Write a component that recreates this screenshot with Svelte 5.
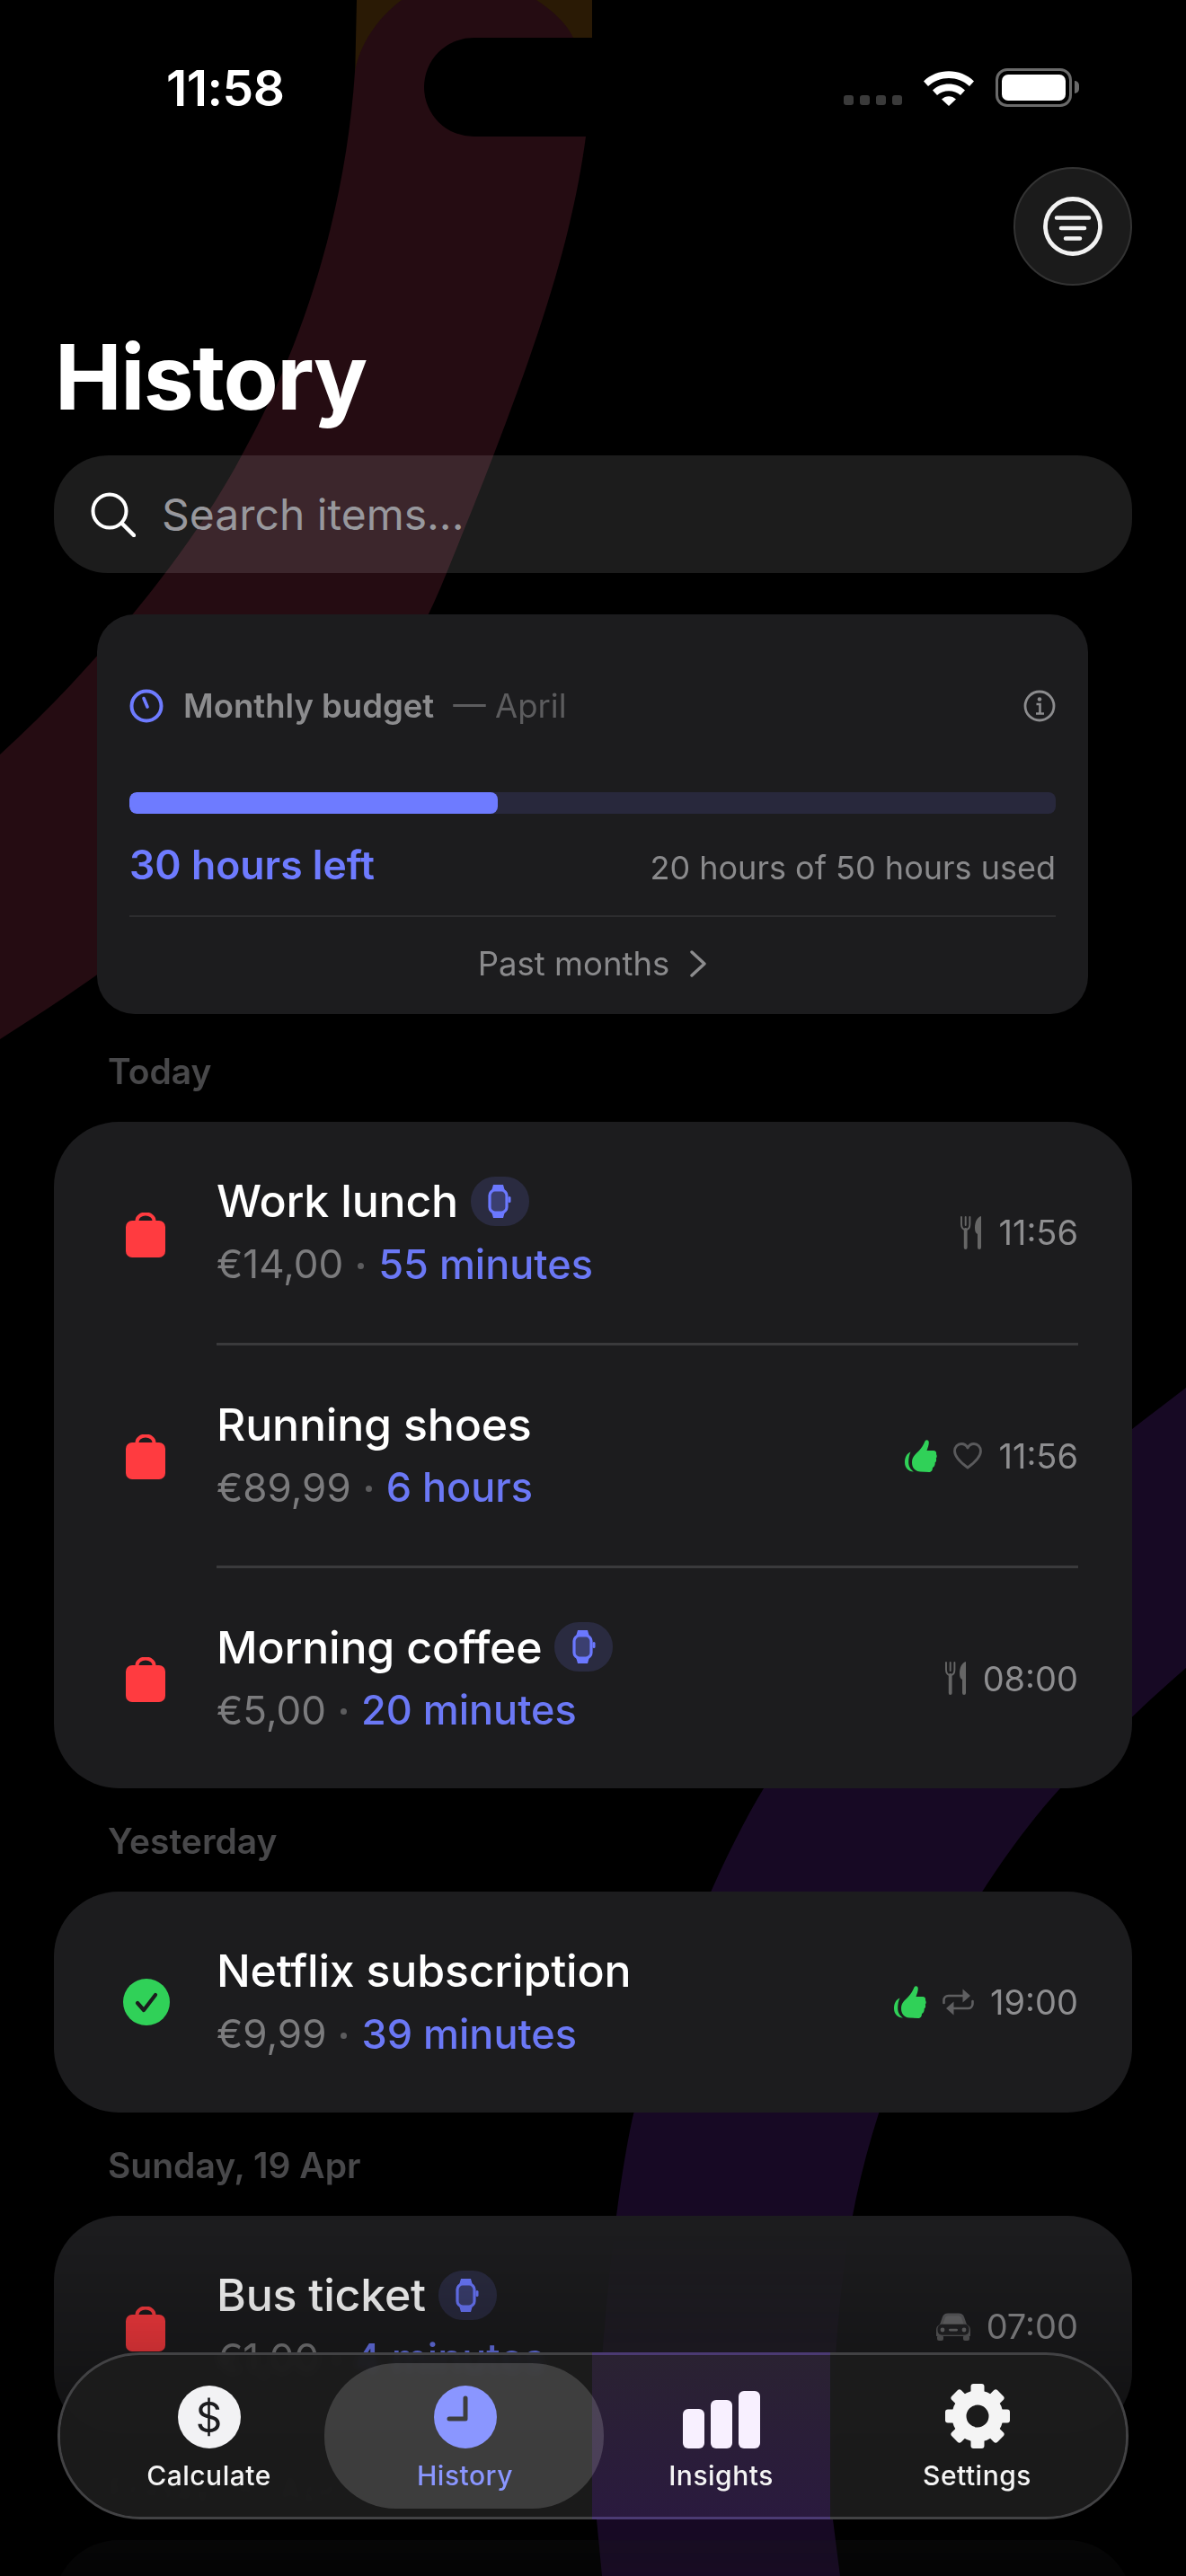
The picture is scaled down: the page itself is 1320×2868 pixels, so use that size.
<script>
  const today = [
    { name: 'Work lunch', watch: true, price: '€14,00', cost: '55 minutes', marks: ['fork'], at: '11:56', status: 'bag' },
    { name: 'Running shoes', price: '€89,99', cost: '6 hours', marks: ['thumb', 'heart'], at: '11:56', status: 'bag' },
    { name: 'Morning coffee', watch: true, price: '€5,00', cost: '20 minutes', marks: ['fork'], at: '08:00', status: 'bag' }
  ];
  const yesterday = [
    { name: 'Netflix subscription', price: '€9,99', cost: '39 minutes', marks: ['thumb', 'repeat'], at: '19:00', status: 'check' }
  ];
  const sunday = [
    { name: 'Bus ticket', watch: true, price: '€1,00', cost: '4 minutes', marks: ['car'], at: '07:00', status: 'bag' }
  ];

  const sections = [
    { label: 'Today', rows: today },
    { label: 'Yesterday', rows: yesterday },
    { label: 'Sunday, 19 Apr', rows: sunday },
    { label: 'Friday, 10 Apr', rows: [] }
  ];

  const tabs = ['Calculate', 'History', 'Insights', 'Settings'];
  const teeth = [0, 45, 90, 135, 180, 225, 270, 315];
</script>

{#snippet mark(kind)}
  {#if kind === 'fork'}
    <svg class="ic" width="24" height="37" viewBox="0 0 24 37">
      <path d="M1 1v8c0 4 2 6 4.7 6s4.7-2 4.700-6V1M5.700 1v9" fill="none" stroke="#666" stroke-width="1.900" stroke-linecap="round"/>
      <rect x="3.800" y="13" width="3.800" height="24" rx="1.900" fill="#666"/>
      <path d="M23 0c-4 1-7 6-7 13 0 4 1 6 3 7v15a2 2 0 0 0 4 0z" fill="#666"/>
    </svg>
  {:else if kind === 'thumb'}
    <svg class="ic" width="36" height="36" viewBox="0 0 36 36">
      <path d="M22.500 1.500C24-.5 26.800.2 26.800 3c0 3-1.300 6-2.300 9H32c2.500 0 3.500 2 3 4 1 1.500 1 3.500-.2 4.800.7 1.700.2 3.700-1.200 4.700.4 2-.4 4.500-2.600 5.500C31 33.500 30 36 27 36l-10-.5c-6-.5-9-4.500-9-10.500 0-6 4-9 8-13 3-3 5-7 6.500-10.500z" fill="#30d158"/>
      <path d="M6.500 13.500C2.500 15 0 19.500 0 25c0 6 4 10.500 10 10.500-4-2.500-5.800-6.500-5.800-10.500 0-4.500.8-8.500 2.300-11.500z" fill="#30d158"/>
    </svg>
  {:else if kind === 'heart'}
    <svg class="ic" width="32" height="30" viewBox="0 0 32 30">
      <path d="M16 28C5 20 1.500 15 1.500 9.500 1.500 5 5 1.500 9 1.500c3 0 5.500 1.500 7 4.500 1.500-3 4-4.500 7-4.500 4 0 7.500 3.500 7.500 8C30.500 15 27 20 16 28z" fill="none" stroke="#5a5a5c" stroke-width="2.800" stroke-linejoin="round"/>
    </svg>
  {:else if kind === 'repeat'}
    <svg class="ic" width="35" height="30" viewBox="0 0 35 30">
      <path d="M1.500 16v-3a5 5 0 0 1 5-5H25M33.500 14v3a5 5 0 0 1-5 5H10" fill="none" stroke="#5f5f61" stroke-width="2.600" stroke-linecap="round"/>
      <path d="M22.500 0.500 31 8l-8.500 7.500zM12.500 14.500 4 22l8.500 7.500z" fill="#5f5f61"/>
    </svg>
  {:else if kind === 'car'}
    <svg class="ic" width="38" height="31" viewBox="0 0 38 31">
      <path d="M4 13 7 4.500C8 1.800 10 .5 13 .5h12c3 0 5 1.300 6 4l3 8.500c2.500 1 4 3 4 6v7H0v-7c0-3 1.500-5 4-6z" fill="#5c5c5e"/>
      <path d="M7.500 12.500 9.700 6c.5-1.500 1.700-2.500 3.300-2.500h12c1.600 0 2.800 1 3.300 2.500l2.200 6.500z" fill="#6a6a6c"/>
      <rect x="1.500" y="12.800" width="35" height="12" rx="5" fill="#242426"/>
      <circle cx="7" cy="19" r="2.400" fill="#6a6a6c"/>
      <circle cx="31" cy="19" r="2.400" fill="#6a6a6c"/>
      <rect x="14" y="17.800" width="10" height="2.600" rx="1.300" fill="#6a6a6c"/>
      <rect x="1" y="25" width="7" height="6" rx="2" fill="#5c5c5e"/>
      <rect x="30" y="25" width="7" height="6" rx="2" fill="#5c5c5e"/>
    </svg>
  {/if}
{/snippet}

{#snippet row(item)}
  <div class="row">
    <div class="lead">
      {#if item.status === 'bag'}
        <svg width="44" height="50" viewBox="0 0 44 50">
          <path d="M12.500 11V9a9.500 7.500 0 0 1 19 0v2" fill="none" stroke="#ff3b40" stroke-width="4"/>
          <rect y="9" width="44" height="41" rx="7" fill="#ff3b40"/>
        </svg>
      {:else}
        <svg class="check" width="52" height="52" viewBox="0 0 52 52">
          <circle cx="26" cy="26" r="26" fill="#30d158"/>
          <path d="M16 27l7 8 13-17" fill="none" stroke="#1c1c1e" stroke-width="4.200" stroke-linecap="round" stroke-linejoin="round"/>
        </svg>
      {/if}
    </div>
    <div class="body">
      <div class="copy">
        <div class="name">
          <span>{item.name}</span>
          {#if item.watch}
            <span class="badge">
              <svg width="26" height="37" viewBox="0 0 26 37">
                <path d="M6 0h11l2 7H4zM4 30h15l-2 7H6z" fill="#6b78ff"/>
                <rect x="2" y="6" width="19" height="25" rx="6" fill="#3b3f70" stroke="#6b78ff" stroke-width="3.200"/>
                <rect x="22.500" y="13" width="3" height="7" rx="1.500" fill="#6b78ff"/>
              </svg>
            </span>
          {/if}
        </div>
        <div class="sub">
          <span class="price">{item.price}</span>
          <i class="dot"></i>
          <span class="cost">{item.cost}</span>
        </div>
      </div>
      <div class="meta">
        {#each item.marks as m}
          {@render mark(m)}
        {/each}
        <span class="at">{item.at}</span>
      </div>
    </div>
  </div>
{/snippet}

<div class="screen">
  <svg class="backdrop" width="1320" height="2868" viewBox="0 0 1320 2868">
    <path d="M397 0H659V42H600L395 90z" fill="#2a1a05"/>
    <path d="M447 0C420 20 400 50 395 80C385 230 340 380 269 507C215 610 110 740 0 840V1157C200 1030 400 880 497 638C590 410 635 280 652 152C655 100 650 60 638 42C630 25 615 12 597 0z" fill="#250c12"/>
    <path d="M1320 1545C1130 1690 950 1830 850 1991C790 2090 730 2250 704 2358C680 2468 660 2700 664 2805L670 2868H935L927 2805C925 2650 930 2500 978 2353C1010 2240 1090 2090 1180 1991C1220 1950 1270 1900 1320 1857z" fill="#170924"/>
  </svg>

  <div class="island"></div>

  <div class="status">
    <span class="clock">11:58</span>
    <div class="indicators">
      <div class="cells"><i></i><i></i><i></i><i></i></div>
      <svg width="58" height="42" viewBox="0 0 58 42">
        <path d="M1 14.500C16-.5 42-.5 57 14.500l-5 5.500C39 8 19 8 6 20z" fill="#fff"/>
        <path d="M11 24.500C20 15 38 15 47 24.500l-5 5.500C35.500 23.500 22.500 23.500 16 30z" fill="#fff"/>
        <path d="M21 34.500c4.500-4.500 11.500-4.500 16 0L29 42z" fill="#fff"/>
      </svg>
      <div class="battery"><b></b><i></i></div>
    </div>
  </div>

  <div class="page">
    <div class="tools">
      <button class="filter" aria-label="Filter">
        <svg width="66" height="66" viewBox="0 0 66 66">
          <circle cx="33" cy="33" r="30.500" fill="none" stroke="#f2f2f2" stroke-width="4.800"/>
          <path d="M15 23.500H51M20 35H46M25 46.500H41" fill="none" stroke="#f2f2f2" stroke-width="4.500" stroke-linecap="round"/>
        </svg>
      </button>
    </div>

    <h1>History</h1>

    <div class="search">
      <svg width="50" height="50" viewBox="0 0 50 50">
        <circle cx="21" cy="21" r="18.500" fill="none" stroke="#fff" stroke-width="4"/>
        <path d="M34.500 34.500L48 48" stroke="#fff" stroke-width="4.500" stroke-linecap="round"/>
      </svg>
      <span>Search items...</span>
    </div>
  </div>

  <div class="list">
    <section class="budget">
      <div class="budget-head">
        <svg width="38" height="38" viewBox="0 0 38 38">
          <circle cx="19" cy="19" r="16.500" fill="none" stroke="#6e7bff" stroke-width="4"/>
          <path d="M16 10.500L20 20" stroke="#6e7bff" stroke-width="3.600" stroke-linecap="round"/>
        </svg>
        <strong>Monthly budget</strong>
        <span class="month">— April</span>
        <svg class="info" width="36" height="36" viewBox="0 0 36 36">
          <circle cx="18" cy="18" r="16" fill="none" stroke="#8c8c8e" stroke-width="2.800"/>
          <circle cx="18" cy="10.500" r="2.300" fill="#8c8c8e"/>
          <path d="M14.500 16H18.500V26M14 26.500H23" fill="none" stroke="#8c8c8e" stroke-width="2.600"/>
        </svg>
      </div>
      <div class="track"><div class="fill" style="width: 39.800%"></div></div>
      <div class="totals">
        <span class="left">30 hours left</span>
        <span class="used">20 hours of 50 hours used</span>
      </div>
      <div class="past">
        <span>Past months</span>
        <svg width="20" height="30" viewBox="0 0 20 30">
          <path d="M3 2l14 13L3 28" fill="none" stroke="#8c8c8e" stroke-width="3.400" stroke-linecap="round" stroke-linejoin="round"/>
        </svg>
      </div>
    </section>

    {#each sections as s}
      <div class="day">{s.label}</div>
      <section class="card">
        {#each s.rows as item}
          {@render row(item)}
        {/each}
      </section>
    {/each}
  </div>

  <nav class="tabs">
    <div class="strip"></div>
    {#each tabs as tab, i}
      <div class="tab" class:active={i === 1}>
        <div class="tab-icon">
          {#if i === 0}
            <span class="coin">$</span>
          {:else if i === 1}
            <svg width="70" height="70" viewBox="0 0 70 70">
              <circle cx="35" cy="35" r="35" fill="#8a96ff"/>
              <path d="M35 14V37H17" fill="none" stroke="#3d3d3d" stroke-width="5" stroke-linecap="round" stroke-linejoin="round"/>
            </svg>
          {:else if i === 2}
            <svg width="86" height="64" viewBox="0 0 86 64">
              <rect y="20" width="24" height="44" rx="6" fill="#f8f0ff"/>
              <rect x="31" y="10" width="24" height="54" rx="6" fill="#f8f0ff"/>
              <rect x="62" width="24" height="64" rx="6" fill="#f8f0ff"/>
            </svg>
          {:else}
            <svg width="72" height="72" viewBox="-36 -36 72 72">
              {#each teeth as a}
                <rect x="-7.500" y="-36" width="15" height="15" rx="3" fill="#f4f4f4" transform="rotate({a})"/>
              {/each}
              <circle r="20.500" fill="none" stroke="#f4f4f4" stroke-width="16"/>
            </svg>
          {/if}
        </div>
        <span class="tab-label">{tab}</span>
      </div>
    {/each}
  </nav>
</div>

<style>
  :global(body) {
    margin: 0;
    background: #000;
  }

  .screen {
    position: relative;
    width: 1320px;
    height: 2868px;
    overflow: hidden;
    background: #000;
    color: #fff;
    font-family: Inter, "Liberation Sans", sans-serif;
  }

  .backdrop {
    position: absolute;
    inset: 0;
  }

  .island {
    position: absolute;
    left: 472px;
    top: 42px;
    width: 376px;
    height: 110px;
    border-radius: 55px;
    background: #000;
  }

  .status {
    position: relative;
    height: 186px;
    box-sizing: border-box;
    display: flex;
    justify-content: space-between;
    padding: 66px 127px 0 185px;
  }

  .clock {
    font-size: 55px;
    line-height: 64px;
    font-weight: 600;
    letter-spacing: -0.5px;
  }

  .indicators {
    display: flex;
    align-items: flex-start;
    gap: 23px;
    padding-top: 10px;
  }

  .cells {
    display: flex;
    gap: 7px;
    padding-top: 30px;
  }

  .cells i {
    width: 11px;
    height: 11px;
    border-radius: 3px;
    background: #3a3a3a;
  }

  .battery {
    position: relative;
    width: 85px;
    height: 43px;
    box-sizing: border-box;
    border: 3px solid #6a6a6a;
    border-radius: 13px;
    padding: 4px;
  }

  .battery b {
    display: block;
    height: 100%;
    border-radius: 7px;
    background: #fff;
  }

  .battery i {
    position: absolute;
    right: -11px;
    top: 11px;
    width: 5px;
    height: 14px;
    border-radius: 0 5px 5px 0;
    background: #6a6a6a;
  }

  .page {
    position: relative;
    padding: 0 60px;
  }

  .tools {
    display: flex;
    justify-content: flex-end;
  }

  .filter {
    width: 132px;
    height: 132px;
    padding: 0;
    display: flex;
    align-items: center;
    justify-content: center;
    border-radius: 50%;
    border: 2px solid #333;
    background: #1b1b1b;
  }

  h1 {
    margin: 45px 0 0 1px;
    font-size: 100px;
    line-height: 114px;
    font-weight: 700;
    letter-spacing: -1.500px;
  }

  .search {
    margin-top: 30px;
    height: 131px;
    box-sizing: border-box;
    display: flex;
    align-items: center;
    gap: 29px;
    padding: 0 41px;
    border-radius: 60px;
    background: rgba(255, 255, 255, 0.11);
    font-size: 48px;
    color: #98989d;
  }

  .list {
    position: relative;
    height: 2230px;
    padding: 46px 60px 0;
    box-sizing: border-box;
    -webkit-mask-image: linear-gradient(#000 1842px, rgba(0, 0, 0, 0.78) 1972px, rgba(0, 0, 0, 0.6) 2062px, rgba(0, 0, 0, 0.22) 2192px, rgba(0, 0, 0, 0.15) 2230px);
    mask-image: linear-gradient(#000 1842px, rgba(0, 0, 0, 0.78) 1972px, rgba(0, 0, 0, 0.6) 2062px, rgba(0, 0, 0, 0.22) 2192px, rgba(0, 0, 0, 0.15) 2230px);
  }

  .budget {
    margin: 0 49px 41px 48px;
    height: 445px;
    box-sizing: border-box;
    padding: 82px 36px 0;
    border-radius: 42px;
    background: #1c1c1e;
  }

  .budget-head {
    display: flex;
    align-items: center;
    height: 40px;
    font-size: 36.500px;
  }

  .budget-head strong {
    margin-left: 22px;
    font-weight: 600;
    color: #8c8c8e;
  }

  .month {
    margin-left: 21px;
    color: #5c5c5e;
  }

  .info {
    margin-left: auto;
  }

  .track {
    margin-top: 76px;
    height: 24px;
    border-radius: 8px;
    background: #28283c;
    overflow: hidden;
  }

  .fill {
    height: 100%;
    border-radius: 8px;
    background: #6e7bff;
  }

  .totals {
    display: flex;
    justify-content: space-between;
    align-items: baseline;
    height: 115px;
    box-sizing: border-box;
    padding-top: 30px;
    border-bottom: 2px solid #2d2d2f;
  }

  .left {
    font-size: 44.500px;
    line-height: 54px;
    font-weight: 600;
    color: #6e7bff;
  }

  .used {
    font-size: 36px;
    color: #8a8a8c;
  }

  .past {
    display: flex;
    align-items: center;
    justify-content: center;
    gap: 22px;
    height: 104px;
    font-size: 36.500px;
    color: #8a8a8c;
  }

  .day {
    margin: 0 0 33px 60px;
    height: 46px;
    line-height: 46px;
    font-size: 39px;
    font-weight: 600;
    color: #48484a;
  }

  .card {
    margin-bottom: 36px;
    min-height: 245px;
    border-radius: 72px;
    background: #1c1c1e;
    overflow: hidden;
  }

  .row {
    display: flex;
    align-items: stretch;
    height: 246px;
  }

  .row + .row {
    height: 248px;
  }

  .lead {
    width: 181px;
    box-sizing: border-box;
    padding-left: 80px;
    display: flex;
    align-items: center;
  }

  .lead svg {
    margin-top: 6px;
  }

  .lead svg.check {
    margin: 0 0 0 -3px;
  }

  .body {
    flex: 1;
    margin-right: 60px;
    display: flex;
    align-items: center;
    justify-content: space-between;
  }

  .row + .row .body {
    border-top: 3px solid #3a3a3c;
  }

  .name {
    display: flex;
    align-items: center;
    gap: 14px;
    height: 70px;
    font-size: 50px;
    font-weight: 500;
    letter-spacing: -0.200px;
  }

  .badge {
    width: 65px;
    height: 55px;
    border-radius: 27px;
    display: flex;
    align-items: center;
    justify-content: center;
    background: #2a2b40;
  }

  .sub {
    display: flex;
    align-items: center;
    height: 70px;
  }

  .price {
    font-size: 44px;
    color: #7b7b7d;
  }

  .dot {
    width: 7px;
    height: 7px;
    margin: 4px 16px 0;
    border-radius: 50%;
    background: #5c5c5e;
  }

  .cost {
    font-size: 45px;
    font-weight: 500;
    color: #6b78f5;
  }

  .meta {
    display: flex;
    align-items: center;
    gap: 18px;
  }

  .at {
    font-size: 38px;
    color: #8e8e90;
  }

  .tabs {
    position: absolute;
    left: 64px;
    top: 2619px;
    width: 1192px;
    height: 186px;
    box-sizing: border-box;
    padding: 0 23px;
    display: grid;
    grid-template-columns: repeat(4, 285px);
    border-radius: 92px;
    border: 3px solid #424244;
    background: rgba(28, 28, 28, 0.93);
    backdrop-filter: blur(4px);
    background-clip: padding-box;
  }

  .strip {
    position: absolute;
    left: 592px;
    top: -3px;
    bottom: -3px;
    width: 265px;
    box-sizing: border-box;
    border-top: 3px solid #4b3a72;
    border-bottom: 3px solid #4b3a72;
    background: linear-gradient(#2a2232, #2a1a3e);
  }

  .tab {
    position: relative;
    display: flex;
    flex-direction: column;
    align-items: center;
    padding-top: 34px;
    grid-row: 1;
  }

  .tab.active::before {
    content: "";
    position: absolute;
    left: -14px;
    right: -12px;
    top: 9px;
    height: 162px;
    border-radius: 80px;
    background: rgba(255, 255, 255, 0.155);
  }

  .tab-icon {
    position: relative;
    height: 70px;
    display: flex;
    align-items: flex-end;
    justify-content: center;
  }

  .coin {
    width: 70px;
    height: 70px;
    border-radius: 50%;
    background: #f2f2f4;
    color: #1c1c1e;
    font-size: 46px;
    line-height: 70px;
    text-align: center;
  }

  .tab-label {
    position: relative;
    margin-top: 10px;
    font-size: 30px;
    line-height: 40px;
    font-weight: 500;
    letter-spacing: 0.500px;
    color: #f4f4f4;
  }

  .active .tab-label {
    color: #8a96ff;
  }
</style>
